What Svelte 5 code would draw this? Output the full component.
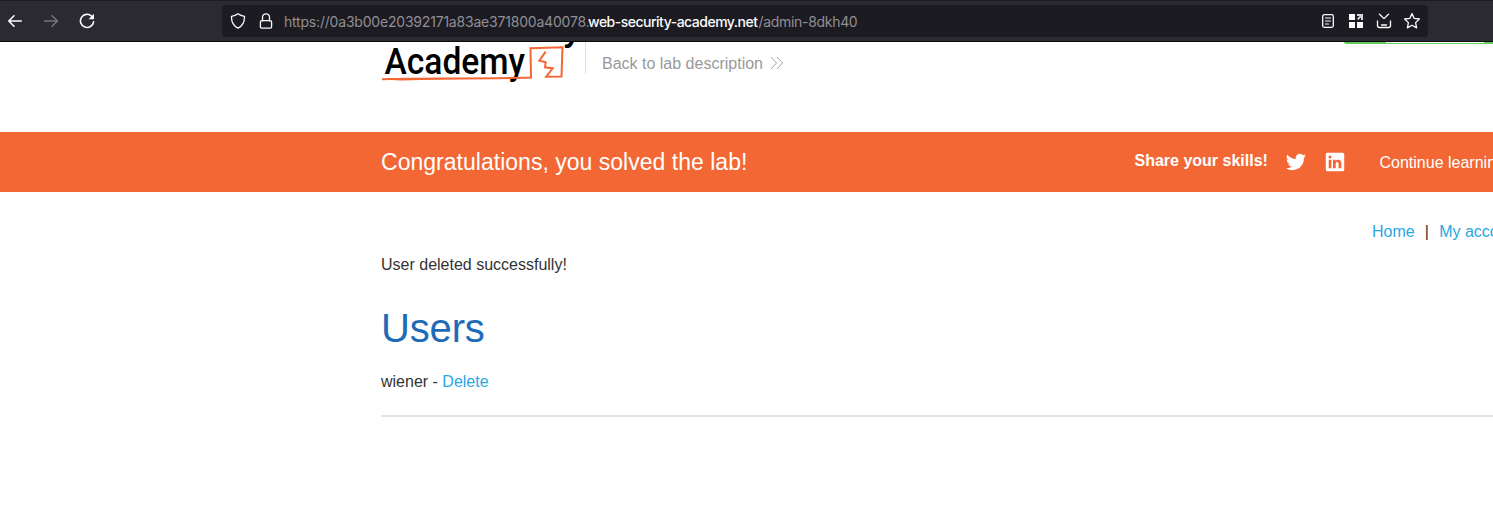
<script>
  const host = 'https://0a3b00e20392171a83ae371800a40078.';
  const domain = 'web-security-academy.net';
  const path = '/admin-8dkh40';
  const users = ['wiener'];
</script>

<div class="window">
  <header class="toolbar">
    <nav class="history">
      <svg width="16" height="16" viewBox="0 0 16 16" class="stroke bright"><path d="M14.3 8H1.800M7 2.800 1.800 8 7 13.200" /></svg>
      <svg width="16" height="16" viewBox="0 0 16 16" class="stroke muted"><path d="M1.500 8h13M9 2.800 14.500 8 9 13.200" /></svg>
      <svg width="16" height="16" viewBox="0 0 16 16" class="stroke bright reload"><path d="M12.700 3.200A6.600 6.600 0 1 0 14.600 8.800" /><path d="M15 .8v5.400H9.600z" fill="#fbfbfe" stroke="none" /></svg>
    </nav>
    <div class="address">
      <svg width="16" height="16" viewBox="0 0 16 16" class="stroke"><path d="M8 .8c2 1.500 4.200 2.200 6.500 2.500C14.700 8.500 12.700 13 8 15.200 3.300 13 1.300 8.500 1.500 3.300 3.800 3 6 2.300 8 .8Z" /></svg>
      <svg width="16" height="16" viewBox="0 0 16 16" class="stroke lock"><path d="M4.500 8V4.300a3.500 3.500 0 0 1 7 0V8" /><rect x="2.400" y="7.600" width="11.200" height="7.600" rx="1.500" /></svg>
      <div class="url"><span class="host">{host}</span><span class="domain">{domain}</span><span class="path">{path}</span></div>
      <div class="actions">
        <svg width="16" height="16" viewBox="0 0 16 16" class="stroke"><rect x="2.700" y="1.700" width="10.600" height="12.600" rx="1.500" /><path d="M5.500 5h5M5.500 8h5M5.500 11h3" stroke-width="1.200" /></svg>
        <svg width="16" height="16" viewBox="0 0 16 16" fill="#fbfbfe"><path d="M1 1h6v6H1zM1 9h6v6H1zM9 9h6v6H9z" /><path d="M9 1h6v6h-2V4.400L10.300 7 9 5.700 11.600 3H9z" fill="#d4d4d9" /></svg>
        <svg width="16" height="16" viewBox="0 0 16 16" class="stroke inbox"><path d="M3.500 1.300 8 5.600 12.500 1.300M1.500 8v4.500a2 2 0 0 0 2 2h9a2 2 0 0 0 2-2V8M5.500 12h5" /></svg>
        <svg width="18" height="18" viewBox="0 0 18 18" class="stroke star"><path d="m9 1.600 2.200 4.800 5.200.6-3.800 3.600 1 5.300L9 13.300l-4.600 2.600 1-5.300L1.600 7l5.200-.6Z" /></svg>
      </div>
    </div>
  </header>

  <section class="lab-header">
    <svg class="logo" width="200" height="44" viewBox="0 0 200 44">
      <text x="3.500" y="31.500" textLength="140.500" lengthAdjust="spacingAndGlyphs" class="word">Academy</text>
      <text x="182" y="-2" class="tail">y</text>
      <path d="M1 37.200c28-1.200 97-.2 149-1.700l-.5-29.300 32-1-1 29.300-15.300.2 6.500-8.400-7.700-1 .7-5-6.400-1.600 6.400-9" fill="none" stroke="#f36735" stroke-width="2" />
      <path d="M1 37.500 20 36l70 .7-70 1.800Z" fill="#f36735" />
    </svg>
    <a class="back" href="#lab"><span>Back to lab description</span>
      <svg width="14" height="14" viewBox="0 0 14 14"><path d="m1 1 5.500 6L1 13M7 1l5.500 6L7 13" fill="none" stroke="#a6a6a6" /></svg>
    </a>
    <div class="status"></div>
  </section>

  <section class="banner">
    <h4>Congratulations, you solved the lab!</h4>
    <div class="share">
      <strong>Share your skills!</strong>
      <svg class="twitter" width="20" height="20" viewBox="0 0 24 24"><path fill="#fff" d="M23.950 4.570a10 10 0 0 1-2.820.77 4.960 4.960 0 0 0 2.160-2.720 9.900 9.900 0 0 1-3.120 1.180 4.920 4.920 0 0 0-8.380 4.480A13.930 13.930 0 0 1 1.640 3.160a4.920 4.920 0 0 0 1.520 6.570 4.900 4.900 0 0 1-2.230-.61v.06a4.920 4.920 0 0 0 3.950 4.830 5 5 0 0 1-2.210.08 4.940 4.940 0 0 0 4.600 3.420A9.870 9.870 0 0 1 0 19.540a13.990 13.990 0 0 0 7.550 2.210c9.050 0 14-7.500 14-13.980 0-.21 0-.42-.02-.63a9.940 9.940 0 0 0 2.420-2.570Z" /></svg>
      <svg class="linkedin" width="20" height="20" viewBox="0 0 20 20"><rect x=".8" y=".8" width="18.400" height="18.400" rx="1.500" fill="#fff" /><path fill="#f36735" d="M3.700 7.800h2.700v8.500H3.700zM8 7.800h2.500V9c1.200-2.100 5.800-2 5.800 2.100v5.200h-2.700v-4.600c0-2.400-2.900-2.200-2.900 0v4.600H8z" /><circle cx="5" cy="5.100" r="1.500" fill="#f36735" /></svg>
    </div>
    <a class="continue" href="#next">Continue learning</a>
  </section>

  <main>
    <nav class="links"><a href="#home">Home</a><span>|</span><a href="#account">My account</a></nav>
    <p class="message">User deleted successfully!</p>
    <h1>Users</h1>
    {#each users as user}
      <p class="user">{user} - <a href="#delete">Delete</a></p>
    {/each}
    <hr />
  </main>
</div>

<style>
  :global(body) { margin: 0; overflow: hidden; background: #fff; }
  * { box-sizing: border-box; }
  svg { display: block; flex: none; }
  a { text-decoration: none; color: #29a7df; }
  .window { width: 1493px; height: 522px; overflow: hidden; font: 16px/20px "Liberation Sans", Arial, sans-serif; color: #333332; white-space: nowrap; }
  .toolbar { height: 42px; background: #2b2a33; border-top: 1px solid #1c1b22; border-bottom: 1px solid #0c0c0d; display: flex; align-items: center; padding-left: 7px; }
  .history { display: flex; gap: 20px; width: 215px; }
  .stroke { fill: none; stroke: #fbfbfe; stroke-width: 1.3; stroke-linecap: round; stroke-linejoin: round; }
  .bright { stroke-width: 1.6; }
  .muted { stroke: #77767d; stroke-width: 1.5; }
  .address { width: 1206px; height: 32px; border-radius: 4px; background: #1c1b22; display: flex; align-items: center; padding: 0 7px 0 8px; }
  .lock { margin-left: 12px; }
  .url { margin-left: 10px; flex: 1; display: flex; font: 14px/20px Inter, sans-serif; color: #8f8f94; padding-top: 1px; }
  .url span { flex: none; }
  .host { width: 304px; letter-spacing: -0.2px; }
  .domain { width: 170.5px; color: #fbfbfe; font-weight: 500; letter-spacing: -0.5px; }
  .path { letter-spacing: -0.31px; }
  .actions { display: flex; gap: 12px; align-items: center; }
  .star { margin-left: -1px; }
  .lab-header { height: 90px; display: flex; align-items: flex-start; padding-left: 381px; }
  .word, .tail { font-family: Roboto, sans-serif; font-weight: 500; font-size: 37.5px; fill: #000; }
  .back { height: 32px; margin-left: 4px; border-left: 1px solid #dedede; padding: 12px 0 0 16px; display: flex; gap: 7px; color: #999; }
  .back svg { margin-top: 2px; }
  .status { margin-left: 560px; width: 150px; height: 2px; border-radius: 0 0 0 8px; background: linear-gradient(90deg, #62cb5b 42px, #fff 42px, #fff 140px, #62cb5b 140px) top / 100% 1px no-repeat, #62cb5b; }
  .banner { height: 60px; background: #f36735; color: #fff; display: flex; align-items: center; padding-left: 381px; }
  .banner > * { flex: none; }
  h4 { margin: 0; width: 753.5px; font-size: 23px; font-weight: 400; line-height: 30px; letter-spacing: 0.02px; }
  .share { display: flex; align-items: center; width: 245px; }
  .share strong { width: 151.5px; padding-bottom: 3px; }
  .linkedin { margin-left: 19px; }
  .continue { color: #fff; padding-top: 1px; }
  main { padding: 30px 0 0 381px; }
  .links { display: flex; padding-left: 991px; }
  .links > * { flex: none; }
  .links span { width: 24.500px; text-align: center; }
  p { margin: 0; }
  .message { margin-top: 13px; }
  h1 { margin: 27px 0 0; font-size: 40px; line-height: 52px; font-weight: 400; color: #1e6bb8; letter-spacing: -0.15px; }
  .user { margin-top: 18px; }
  hr { margin: 23px 0 0; border: 0; height: 2px; background: #e3e3e3; }
</style>
